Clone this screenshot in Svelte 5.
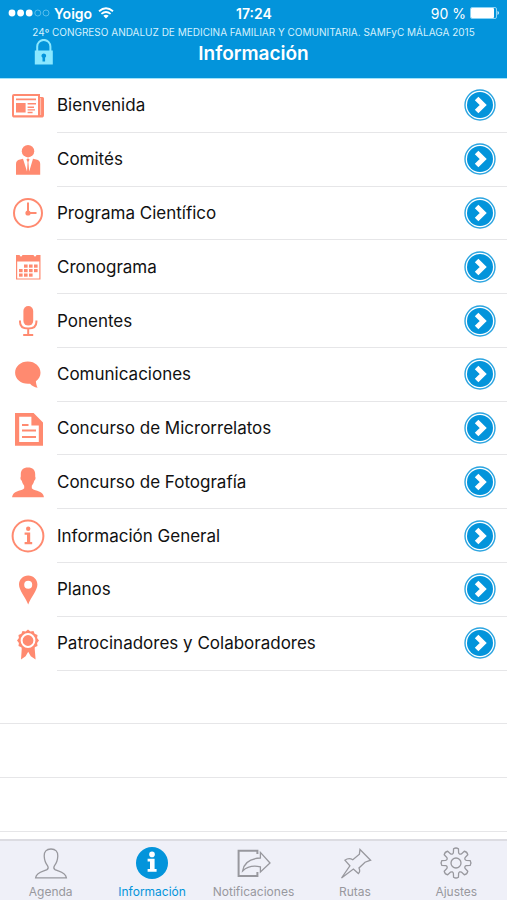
<script lang="ts">
  type Item = { icon: string; label: string };

  const items: Item[] = [
    { icon: 'news', label: 'Bienvenida' },
    { icon: 'committee', label: 'Comités' },
    { icon: 'clock', label: 'Programa Científico' },
    { icon: 'calendar', label: 'Cronograma' },
    { icon: 'mic', label: 'Ponentes' },
    { icon: 'bubble', label: 'Comunicaciones' },
    { icon: 'document', label: 'Concurso de Microrrelatos' },
    { icon: 'person', label: 'Concurso de Fotografía' },
    { icon: 'info', label: 'Información General' },
    { icon: 'pin', label: 'Planos' },
    { icon: 'ribbon', label: 'Patrocinadores y Colaboradores' },
  ];

  // empty separators under the last item, like a plain table view
  const emptyRows = 3;

  const tabs: Item[] = [
    { icon: 'agenda', label: 'Agenda' },
    { icon: 'info', label: 'Información' },
    { icon: 'share', label: 'Notificaciones' },
    { icon: 'pushpin', label: 'Rutas' },
    { icon: 'gear', label: 'Ajustes' },
  ];

  const calendarDots = [
    [14, 15.5], [19, 15.5], [24, 15.5],
    [9, 20], [14, 20], [19, 20], [24, 20],
    [9, 24.5], [14, 24.5], [19, 24.5],
  ];

  let activeTab = $state('Información');

  function polar(radius: number, angle: number, cy = 18) {
    return `${(18 + radius * Math.sin(angle)).toFixed(2)} ${(cy - radius * Math.cos(angle)).toFixed(2)}`;
  }

  function gearPath() {
    const step = Math.PI / 4;
    let d = '';
    for (let i = 0; i < 8; i++) {
      const a = i * step;
      d += `${i ? 'L' : 'M'}${polar(10.6, a - 0.25)}L${polar(14.4, a - 0.17)}`;
      d += `Q${polar(15.8, a)} ${polar(14.4, a + 0.17)}L${polar(10.6, a + 0.25)}`;
      d += `Q${polar(8.8, a + step / 2)} ${polar(10.6, a + step - 0.25)}`;
    }
    return d + 'Z';
  }

  function rosettePath() {
    const points: string[] = [];
    for (let i = 0; i < 24; i++) {
      points.push(polar(i % 2 ? 9.4 : 11, (i * Math.PI) / 12, 14.5));
    }
    return 'M' + points.join('L') + 'Z';
  }
</script>

<div class="app">
  <header>
    <div class="status-bar">
      <div class="carrier">
        <svg class="signal" viewBox="0 0 42 8" aria-hidden="true">
          <circle cx="4" cy="4" r="3.4" />
          <circle cx="12.6" cy="4" r="3.4" />
          <circle cx="21.2" cy="4" r="3.4" />
          <circle class="off" cx="29.8" cy="4" r="3" />
          <circle class="off" cx="38" cy="4" r="3" />
        </svg>
        <span>Yoigo</span>
        <svg class="wifi" viewBox="0 0 16 12" aria-hidden="true">
          <path d="M1 4.2Q8-1.8 15 4.2M3.4 6.9Q8 3 12.6 6.9" />
          <path class="dot" d="M8 11.4L5.3 8.8Q8 6.6 10.7 8.8Z" />
        </svg>
      </div>
      <time>17:24</time>
      <div class="battery">
        <span>90 %</span>
        <svg viewBox="0 0 30 12" aria-hidden="true">
          <rect class="cell" x="0.5" y="0.5" width="26" height="11" rx="1.5" />
          <rect x="1" y="1" width="23" height="10" rx="1" />
          <path d="M27.6 3.8Q30 6 27.6 8.2Z" />
        </svg>
      </div>
    </div>
    <p class="event">24º CONGRESO ANDALUZ DE MEDICINA FAMILIAR Y COMUNITARIA. SAMFyC MÁLAGA 2015</p>
    <div class="title-bar">
      <button class="lock" aria-label="Bloquear">
        <svg viewBox="0 0 20 26" aria-hidden="true">
          <path class="shackle" d="M3.2 12V7.5a6.6 6.6 0 0 1 13.2 0V12" />
          <path fill-rule="evenodd" d="M.8 11.5h18v14H.8ZM9.8 14.4a2.4 2.4 0 0 0-1.3 4.4V22.6h2.6V18.8a2.4 2.4 0 0 0-1.3-4.4Z" />
        </svg>
      </button>
      <h1>Información</h1>
    </div>
  </header>

  <main>
    {#each items as item}
      <a class="row" href="#{item.icon}">
        <svg class="icon" viewBox="0 0 36 36" aria-hidden="true">
          {#if item.icon === 'news'}
            <path fill-rule="evenodd" d="M4 6h26v3h2.5q1.5 0 1.5 1.5V27q0 2.6-2.6 2.6H4.6q-2.6 0-2.6-2.6V8q0-2 2-2ZM4 8V27.2h24V8Z" />
            <path d="M6 10.4h20v1.8H6ZM6 15h9.6v9.6H6ZM17.6 15H26v1.6h-8.4ZM17.6 18.4H24V20h-6.4ZM17.6 21.2H25v1.4h-7.4ZM17.6 23.8h5v1.4h-5Z" />
            <path class="gap" d="M30.6 10v17" />
          {:else if item.icon === 'committee'}
            <circle cx="18" cy="9.2" r="6.2" />
            <path d="M6 32.8V22q0-3.6 4-4.4l3-.8 4 12.6.6-9.4-1.2-2.4 1.6-1.4 1.6 1.4-1.2 2.4.8 9.4 3.8-12.6 3.2.8q4 .8 4 4.4v10.800Z" />
          {:else if item.icon === 'clock'}
            <circle class="line" cx="18" cy="18" r="14" />
            <path class="line" d="M18 7.500V18h8.500" />
            <circle cx="18" cy="18" r="2.6" />
          {:else if item.icon === 'calendar'}
            <path fill-rule="evenodd" d="M6 6h3.500q1.500 3 3 0h11q1.500 3 3 0h4v24.600H6ZM7.200 12.400v17h22.100v-17Z" />
            {#each calendarDots as [x, y]}
              <rect {x} {y} width="3.6" height="3.2" />
            {/each}
          {:else if item.icon === 'mic'}
            <rect x="13.4" y="3" width="9.8" height="19.6" rx="4.9" />
            <path class="line" d="M10 17.5v1.500q0 6.600 8.200 6.600t8.200-6.600v-1.500M18.200 25.600v6M13.200 32h10" />
          {:else if item.icon === 'bubble'}
            <path d="M17.8 4.6c7.200 0 12.700 4.900 12.700 11.200 0 3.600-1.700 6.500-4.600 8.500.2 2.200.6 4.500 1.700 6.500-3.300-.6-5.700-2-7.500-4.100-8.400 1-15-4.100-15-10.900C5.100 9.500 10.600 4.600 17.800 4.600Z" />
          {:else if item.icon === 'document'}
            <path fill-rule="evenodd" d="M5 2h18.600L33 11.400V34.800H5ZM9.200 5.800V31h19.600V14.600h-7.400V5.800Z" />
            <path class="line" d="M12 14h6.500M12 19.500h14M12 26h14" />
          {:else if item.icon === 'person'}
            <path d="M18 3.400c4.800 0 7.200 2.600 7.200 6.800v2.400c.8 1.600.2 3.400-1 4.200-.6 2.600-1.500 3.800-2.400 5v2.400c1.400 2.200 9.400 2.600 11.200 6.200.6 1 .9 2 .9 2.800H2.100c0-.8.3-1.800.9-2.800 1.800-3.600 9.800-4 11.200-6.200v-2.400c-.9-1.200-1.800-2.400-2.400-5-1.200-.8-1.800-2.600-1-4.200v-2.400C10.800 6 13.200 3.400 18 3.400Z" />
          {:else if item.icon === 'info'}
            <circle class="line" cx="18" cy="18" r="15.4" />
            <circle cx="18.2" cy="10.8" r="2.2" />
            <path d="M14.600 14.600h5.600V24h2v2.200h-7.600V24h2.400v-7.200h-2.400Z" />
          {:else if item.icon === 'pin'}
            <path fill-rule="evenodd" d="M18.200 3.600c5.200 0 9.200 4 9.200 9 0 6-6.400 12.400-9.200 20-2.800-7.600-9.200-14-9.200-20 0-5 4-9 9.200-9ZM18.200 8.800a4 4 0 1 0 0 8 4 4 0 0 0 0-8Z" />
          {:else if item.icon === 'ribbon'}
            <path d="M12 19L11 33.500l4.600-3.200 2.600-4.600 2.600 4.600 4.800 3.200L24.400 19Z" />
            <path d={rosettePath()} />
            <circle class="ring" cx="18" cy="14.5" r="6.4" />
          {/if}
        </svg>
        <span class="label">
          {item.label}
          <svg class="go" viewBox="0 0 32 32" aria-hidden="true">
            <circle class="rim" cx="16" cy="16" r="15" />
            <circle cx="16" cy="16" r="13" />
            <path d="M12.6 9.4L19.2 16l-6.600 6.600" />
          </svg>
        </span>
      </a>
    {/each}
    {#each { length: emptyRows } as _}
      <div class="row empty"></div>
    {/each}
  </main>

  <nav>
    {#each tabs as tab}
      <button class="tab" class:active={activeTab === tab.label} onclick={() => (activeTab = tab.label)}>
        <svg class="icon" viewBox="0 0 36 36" aria-hidden="true">
          {#if tab.icon === 'agenda'}
            <path d="M18 4c4.600 0 7 2.600 6.800 7-.2 4.600-1.600 7.600-3.400 9.800-.8 1.400-.6 3 .6 3.800 3 1.800 10.600 2.400 11.400 8.200H2.600c.8-5.800 8.400-6.400 11.400-8.200 1.200-.8 1.400-2.400.6-3.800-1.800-2.200-3.200-5.200-3.400-9.800C11 6.600 13.400 4 18 4Z" />
          {:else if tab.icon === 'info'}
            <circle class="disc" cx="18" cy="18" r="16" />
            <circle class="glyph" cx="18" cy="9.4" r="2.8" />
            <path class="glyph" d="M13.600 13.800h7V24h2v2.800h-9V24H16v-7.400h-2.400Z" />
          {:else if tab.icon === 'share'}
            <path class="frame" d="M22.400 9V5.800H3.600V31h18.800v-4" />
            <path d="M25.400 7.400L35 18l-9.600 9v-5.200Q14.400 19.400 7.600 26 9.600 13.800 25.400 13Z" />
          {:else if tab.icon === 'pushpin'}
            <path d="M23 4.500L33.600 15.200 28 17.200 22 23q1.600 3.600-.6 5.600l-5-4.600L4.500 33l8.400-12.200-5-5.600q4-2.800 7.900-.4l6.600-5.600Z" />
          {:else}
            <path d={gearPath()} />
            <circle cx="18" cy="18" r="5" />
          {/if}
        </svg>
        <span>{tab.label}</span>
      </button>
    {/each}
  </nav>
</div>

<style>
  :global(body) {
    margin: 0;
  }

  .app {
    display: flex;
    flex-direction: column;
    min-height: 100vh;
    background: #fff;
    color: #111;
    font-family: Inter, 'Liberation Sans', sans-serif;
  }

  header {
    background: #0394db;
    color: #fff;
    border-bottom: 1px solid #9fe3fb;
  }

  .status-bar {
    display: grid;
    grid-template-columns: 1fr auto 1fr;
    align-items: center;
    height: 26px;
    padding: 0 7px 0 8px;
    font-size: 14px;
    font-weight: 600;
  }

  .status-bar svg {
    fill: #fff;
  }

  .carrier,
  .battery {
    display: flex;
    align-items: center;
    gap: 4px;
  }

  .battery {
    justify-content: flex-end;
    font-weight: 400;
  }

  .signal {
    width: 42px;
    height: 8px;
  }

  .signal .off {
    fill: none;
    stroke: #6cc6f0;
    stroke-width: 0.8;
  }

  .wifi {
    width: 16px;
    height: 12px;
    margin-left: 2px;
  }

  .wifi path {
    fill: none;
    stroke: #fff;
    stroke-width: 1.8;
  }

  .wifi .dot {
    fill: #fff;
    stroke: none;
  }

  .battery svg {
    width: 30px;
    height: 12px;
  }

  .battery .cell {
    fill: none;
    stroke: #8bd3f5;
  }

  .event {
    margin: 0;
    font-size: 10px;
    line-height: 13px;
    text-align: center;
    white-space: nowrap;
    color: #d5f1fd;
  }

  .title-bar {
    display: grid;
    grid-template-columns: 1fr auto 1fr;
    align-items: start;
    height: 39px;
    padding: 0 34px;
  }

  .lock {
    justify-self: start;
    padding: 0;
    border: 0;
    background: none;
    cursor: pointer;
  }

  .lock svg {
    display: block;
    width: 20px;
    height: 26px;
    fill: #8be8ff;
  }

  .lock .shackle {
    fill: none;
    stroke: #8be8ff;
    stroke-width: 2;
  }

  h1 {
    margin: 0;
    font-size: 19px;
    line-height: 30px;
    font-weight: 600;
  }

  main {
    flex: 1;
    display: flex;
    flex-direction: column;
    padding-bottom: 7px;
  }

  .row {
    box-sizing: border-box;
    flex: 1 0 52px;
    display: flex;
    align-items: stretch;
    gap: 11px;
    padding-left: 10px;
    color: inherit;
    text-decoration: none;
  }

  .row .icon {
    align-self: center;
    width: 36px;
    height: 36px;
    fill: #ff8a70;
  }

  .row .line {
    fill: none;
    stroke: #ff8a70;
    stroke-width: 2;
  }

  .row .gap {
    stroke: #ffc4b6;
    stroke-width: 1;
  }

  .row .ring {
    fill: none;
    stroke: #fff;
    stroke-width: 2;
  }

  .label {
    flex: 1;
    display: flex;
    align-items: center;
    justify-content: space-between;
    padding-right: 11px;
    border-bottom: 1px solid #e6e6e8;
    font-size: 17px;
  }

  .go {
    width: 32px;
    height: 32px;
    fill: #0394db;
  }

  .go .rim {
    fill: #fff;
    stroke: #2ba4e0;
    stroke-width: 1.4;
  }

  .go path {
    fill: none;
    stroke: #fff;
    stroke-width: 5;
  }

  .empty {
    border-bottom: 1px solid #e6e6e8;
  }

  nav {
    display: grid;
    grid-template-columns: repeat(5, 1fr);
    border-top: 2px solid #dcdce2;
    background: #eff0f8;
  }

  .tab {
    display: flex;
    flex-direction: column;
    align-items: center;
    gap: 2px;
    padding: 4px 0 0;
    border: 0;
    background: none;
    color: #98989e;
    font: inherit;
    font-size: 12px;
    line-height: 17px;
    cursor: pointer;
  }

  .tab .icon {
    width: 36px;
    height: 36px;
    fill: none;
    stroke: #98989e;
    stroke-width: 1.3;
  }

  .tab .frame {
    stroke-width: 2;
  }

  .tab.active {
    color: #0394db;
  }

  .tab .disc {
    fill: #98989e;
    stroke: none;
  }

  .tab.active .disc {
    fill: #0394db;
  }

  .tab .glyph {
    fill: #fff;
    stroke: none;
  }
</style>
